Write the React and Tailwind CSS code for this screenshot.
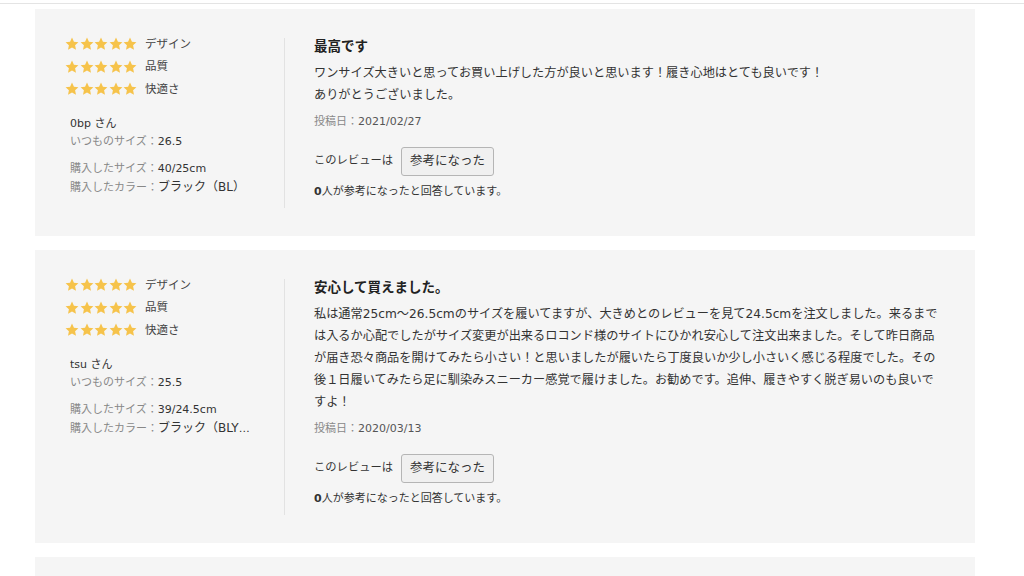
import React from "react";

const reviews = [
  {
    name: "0bp",
    usual: "26.5",
    size: "40/25cm",
    color: "ブラック（BL）",
    title: "最高です",
    body: ["ワンサイズ大きいと思ってお買い上げした方が良いと思います！履き心地はとても良いです！", "ありがとうございました。"],
    date: "2021/02/27",
  },
  {
    name: "tsu",
    usual: "25.5",
    size: "39/24.5cm",
    color: "ブラック（BLYK）",
    title: "安心して買えました。",
    body: [
      "私は通常25cm～26.5cmのサイズを履いてますが、大きめとのレビューを見て24.5cmを注文しました。来るまでは入るか心配でしたがサイズ変更が出来るロコンド様のサイトにひかれ安心して注文出来ました。そして昨日商品が届き恐々商品を開けてみたら小さい！と思いましたが履いたら丁度良いか少し小さいく感じる程度でした。その後１日履いてみたら足に馴染みスニーカー感覚で履けました。お勧めです。追伸、履きやすく脱ぎ易いのも良いですよ！",
    ],
    date: "2020/03/13",
  },
];

function Stars() {
  return (
    <div className="flex gap-[0.5px]">
      {[0, 1, 2, 3, 4].map((i) => (
        <svg key={i} width="14" height="14" viewBox="0 0 24 24">
          <polygon
            points="12,1 15.3,8 23,9 17.3,14.2 18.8,22 12,18.2 5.2,22 6.7,14.2 1,9 8.7,8"
            fill="#f6c34b"
          />
        </svg>
      ))}
    </div>
  );
}

function ReviewCard({ review }) {
  return (
    <div className="w-[940px] bg-[#f5f5f5] flex pt-[24px] pb-[28px] pl-[30px] pr-[31px]">
      {/* Left: ratings and reviewer */}
      <div className="w-[219px] shrink-0 pr-[30px]">
        {["デザイン", "品質", "快適さ"].map((label) => (
          <div key={label} className="h-[22.5px] flex items-center gap-[8px]">
            <Stars />
            <span className="text-[11.5px] text-[#444]">{label}</span>
          </div>
        ))}
        <div className="pl-[5px] mt-[14px] text-[11px] leading-[18px] text-[#333]">
          <p>{review.name} さん</p>
          <p>
            <span className="text-[#888]">いつものサイズ：</span>
            {review.usual}
          </p>
          <p className="mt-[9px]">
            <span className="text-[#888]">購入したサイズ：</span>
            {review.size}
          </p>
          <p className="truncate">
            <span className="text-[#888]">購入したカラー：</span>
            <span className="text-[12px]">{review.color}</span>
          </p>
        </div>
      </div>

      {/* Right: review text */}
      <div className="mt-[5px] border-l border-[#e2e2e2] pl-[29px] pb-[8px] w-[659px]">
        <h3 className="text-[13.5px] leading-[16px] font-bold text-[#222]">{review.title}</h3>
        <div className="mt-[8px] text-[12.2px] leading-[22px] text-[#333] w-[630px]">
          {review.body.map((line, i) => (
            <p key={i}>{line}</p>
          ))}
        </div>
        <p className="mt-[8px] text-[11px] leading-[16px] text-[#888]">
          投稿日：<span className="text-[#555]">{review.date}</span>
        </p>
        <div className="mt-[17px] flex items-center gap-[8px]">
          <span className="text-[11.3px] text-[#333]">このレビューは</span>
          <button className="h-[29px] px-[8px] border border-[#b5b5b5] bg-[#f0f0f0] rounded-[3px] text-[12.5px] text-[#333]">
            参考になった
          </button>
        </div>
        <p className="mt-[8px] text-[11px] leading-[16px] text-[#333]">
          <span className="font-bold">0</span>人が参考になったと回答しています。
        </p>
      </div>
    </div>
  );
}

export default function App() {
  return (
    <div
      className="min-h-screen bg-white"
      style={{ fontFamily: '"DejaVu Sans", "Noto Sans CJK JP", sans-serif' }}
    >
      <div className="h-[4px] border-b border-[#e4e4e4]" />
      <div className="ml-[35px] pt-[5px] flex flex-col gap-[14px]">
        {reviews.map((r, i) => (
          <ReviewCard key={i} review={r} />
        ))}
        {/* next review, only its top edge is in view */}
        <div className="w-[940px] h-[200px] bg-[#f5f5f5]" />
      </div>
    </div>
  );
}
